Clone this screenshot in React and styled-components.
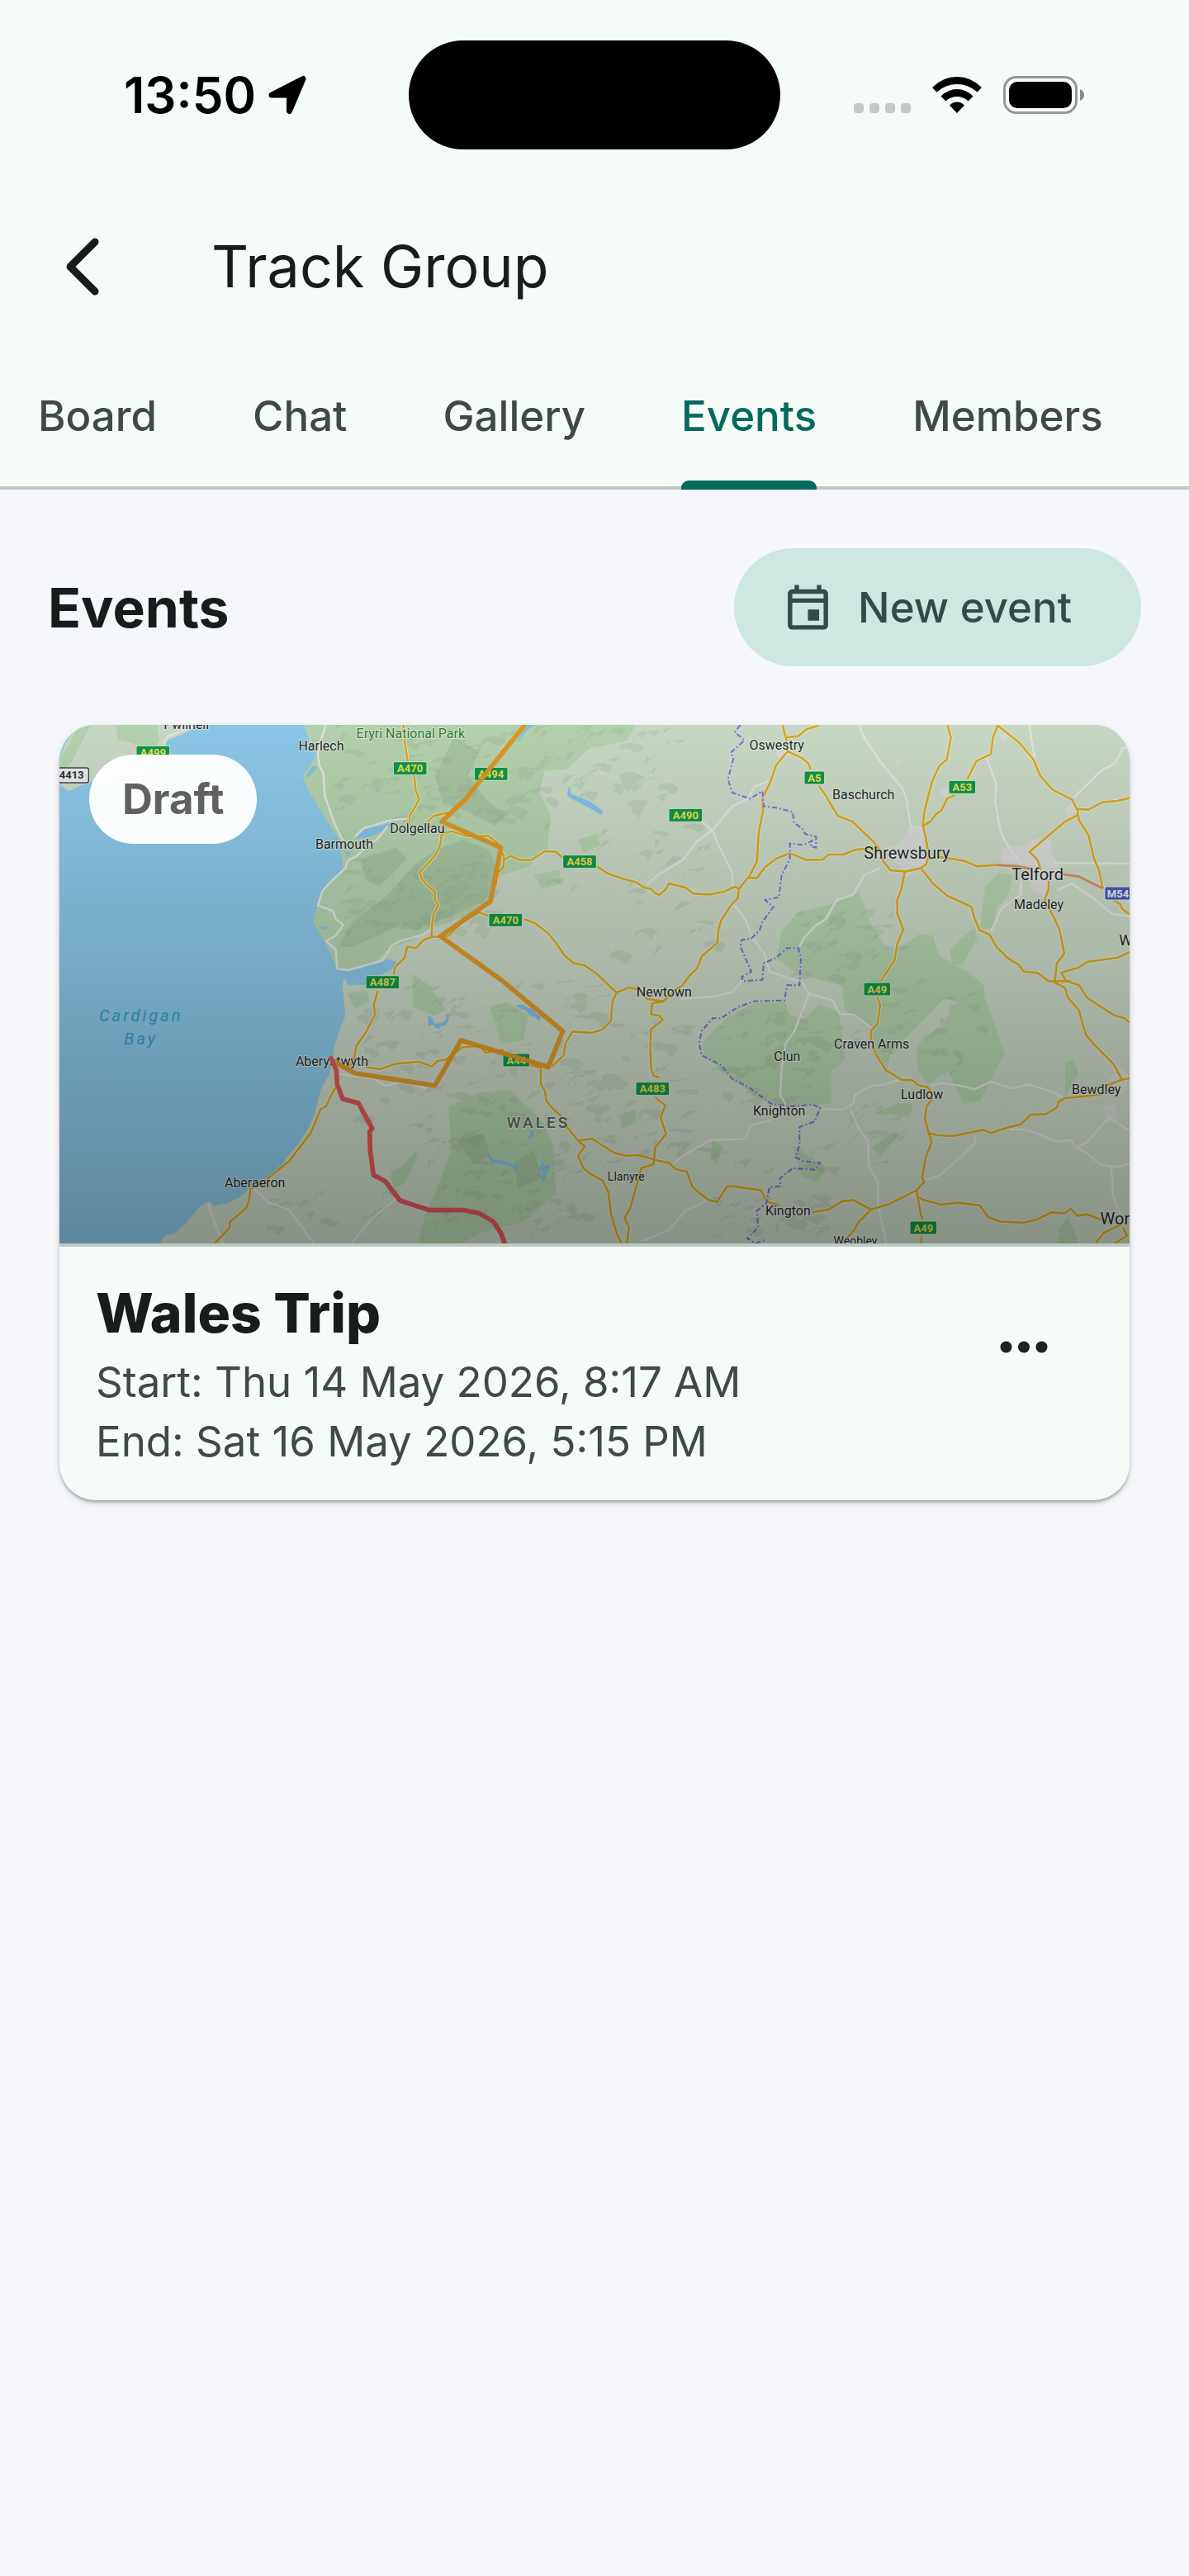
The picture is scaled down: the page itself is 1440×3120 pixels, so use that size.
import React from "react";
import styled, { createGlobalStyle, ThemeProvider } from "styled-components";

const theme = {
  colors: {
    surface: "#f5fbf7",
    page: "#f6f7fa",
    text: "#171d1b",
    muted: "#3f4946",
    primary: "#046b5c",
    tonal: "#cde8e0",
    onTonal: "#334b46",
    outline: "#bec9c4",
    draft: "#616161",
  },
  font: `Inter, Roboto, "Liberation Sans", sans-serif`,
};

const GlobalStyle = createGlobalStyle`
  * {
    box-sizing: border-box;
  }
  body {
    margin: 0;
    background-color: ${(props) => props.theme.colors.page};
    color: ${(props) => props.theme.colors.text};
    font-family: ${(props) => props.theme.font};
  }
  button {
    border: 0;
    padding: 0;
    background: none;
    color: inherit;
    font: inherit;
    cursor: pointer;
  }
  svg {
    display: block;
  }
`;

const Screen = styled.div`
  min-height: 100vh;
`;

const TopArea = styled.header`
  background: ${(props) => props.theme.colors.surface};
`;

const StatusBar = styled.div`
  display: grid;
  grid-template-columns: 1fr 450px 1fr;
  align-items: center;
  padding: 49px 0 35px;
  color: #000;
`;

const Clock = styled.div`
  display: flex;
  align-items: center;
  gap: 14px;
  padding-left: 150px;
  font-size: 60px;
  line-height: 72px;
  font-weight: 600;
`;

const Island = styled.div`
  height: 132px;
  border-radius: 66px;
  background: #000;
`;

const StatusIcons = styled.div`
  display: flex;
  align-items: center;
  justify-content: flex-end;
  gap: 26px;
  padding-right: 126px;
`;

const AppBar = styled.div`
  display: flex;
  align-items: center;
  gap: 96px;
  height: 214px;
  padding-left: 40px;
`;

const BackButton = styled.button`
  display: flex;
  align-items: center;
  justify-content: center;
  width: 120px;
  height: 120px;
`;

const PageTitle = styled.h1`
  margin: 0;
  font-size: 70px;
  line-height: 96px;
  font-weight: 400;
`;

const TabBar = styled.nav`
  display: flex;
  gap: 116px;
  height: 163px;
  padding-left: 46px;
  box-shadow: inset 0 -4px ${(props) => props.theme.colors.outline};
`;

const Tab = styled.button`
  position: relative;
  padding-bottom: 16px;
  font-size: 51px;
  line-height: 72px;
  font-weight: 500;
  white-space: nowrap;
  color: ${(props) =>
    props.$active ? props.theme.colors.primary : props.theme.colors.muted};

  &::after {
    content: "";
    display: ${(props) => (props.$active ? "block" : "none")};
    position: absolute;
    left: 0;
    right: 0;
    bottom: 0;
    height: 11px;
    border-radius: 9px 9px 0 0;
    background: ${(props) => props.theme.colors.primary};
  }
`;

const SectionHeader = styled.div`
  display: flex;
  align-items: center;
  justify-content: space-between;
  padding: 71px 58px;
`;

const SectionTitle = styled.h2`
  margin: 0;
  font-size: 66px;
  line-height: 76px;
  font-weight: 700;
`;

const NewEventButton = styled.button`
  display: flex;
  align-items: center;
  gap: 28px;
  height: 143px;
  padding: 0 84px 0 57px;
  border-radius: 72px;
  background: ${(props) => props.theme.colors.tonal};
  color: ${(props) => props.theme.colors.onTonal};
  font-size: 51px;
  line-height: 72px;
  font-weight: 500;
`;

const Card = styled.article`
  margin: 0 72px;
  border-radius: 44px;
  overflow: hidden;
  background: ${(props) => props.theme.colors.surface};
  box-shadow: 0 3px 3px rgba(0, 0, 0, 0.22), 0 3px 10px rgba(0, 0, 0, 0.12);
`;

const Cover = styled.div`
  position: relative;
  border-bottom: 4px solid ${(props) => props.theme.colors.outline};

  > svg {
    width: 100%;
    height: auto;
  }
`;

const DraftBadge = styled.span`
  position: absolute;
  top: 36px;
  left: 36px;
  padding: 18px 40px;
  border-radius: 54px;
  background: rgba(255, 255, 255, 0.96);
  color: ${(props) => props.theme.colors.draft};
  font-size: 51px;
  line-height: 72px;
  font-weight: 700;
`;

const CardBody = styled.div`
  display: flex;
  align-items: flex-start;
  justify-content: space-between;
  padding: 42px 68px 35px 44px;
`;

const EventTitle = styled.h3`
  margin: 0 0 10px;
  font-size: 66px;
  line-height: 76px;
  font-weight: 800;
`;

const EventDate = styled.p`
  margin: 0;
  font-size: 51px;
  line-height: 72px;
  color: ${(props) => props.theme.colors.muted};
`;

const MenuButton = styled.button`
  display: flex;
  align-items: center;
  justify-content: center;
  width: 120px;
  height: 120px;
  margin-top: 19px;
`;

const MapLabel = styled.text`
  font-family: Roboto, "Liberation Sans", sans-serif;
  font-size: ${(props) => props.$size || 48}px;
  fill: ${(props) => props.$fill || "#222a2c"};
  stroke: rgba(232, 236, 226, 0.75);
  stroke-width: 6px;
  stroke-linejoin: round;
  paint-order: stroke;
  text-anchor: middle;
`;

const CountryLabel = styled(MapLabel)`
  font-weight: 500;
  letter-spacing: 9px;
`;

const SeaLabel = styled.text`
  font-family: Roboto, "Liberation Sans", sans-serif;
  font-size: 60px;
  font-style: italic;
  letter-spacing: 9px;
  fill: #359cc9;
  text-anchor: middle;
`;

const SignText = styled.text`
  font-family: Roboto, "Liberation Sans", sans-serif;
  font-size: 39px;
  font-weight: 700;
  text-anchor: middle;
`;

const TABS = ["Board", "Chat", "Gallery", "Events", "Members"];

/* map data, in the units of the map's own view box */

const LAND = [
  "925,54 945,110 970,165 955,205 920,240 940,290 1000,380 1030,425 1050,470 1072,520 1065,560 1070,585 1010,630 990,660 975,710 957,770 985,815 1010,860 1045,942 1085,947 1180,918 1225,905 1262,915 1240,945 1200,962 1150,998 1085,998 1068,972 1065,1010 1075,1110 1055,1160 1035,1220 1028,1280 1018,1320 985,1380 965,1460 940,1520 900,1580 865,1620 840,1660 800,1695 730,1738 690,1770 645,1792 600,1802 580,1785 550,1800 490,1870 450,1905 420,1908 400,1938 3924,1938 3924,54",
  "100,54 80,90 58,120 36,180 36,270 70,295 110,275 150,262 250,260 300,240 370,215 370,190 420,150 424,112 500,80 545,54",
];

const GREENS = [
  "925,54 2130,54 2100,110 1960,140 1880,215 1800,220 1780,300 1820,380 1810,500 1740,570 1640,600 1580,720 1400,790 1330,830 1230,870 1180,915 1085,945 1045,940 1010,860 957,770 975,710 990,660 1070,585 1050,470 940,290 920,240 970,165",
  "36,180 60,140 110,54 150,54 110,130 80,190 36,230",
  "240,54 390,54 400,110 370,150 300,120 250,110",
  "1080,1030 1150,1020 1165,1060 1110,1085",
  "1450,1440 1560,1390 1670,1380 1780,1480 1830,1580 1840,1760 1720,1860 1560,1900 1500,1938 1340,1938 1370,1820 1400,1760 1460,1600",
  "1290,1720 1250,1740 1240,1680 1290,1650 1330,1600 1335,1630",
  "1400,1110 1320,1080 1320,960 1380,1000 1440,1090",
  "1600,1080 1660,1060 1740,1110 1720,1200 1640,1210",
  "2370,1210 2460,1120 2560,1065 2670,1060 2690,1110 2740,1120 2800,1070 2870,1100 2890,1270 2840,1310 2840,1430 2640,1440 2560,1400 2480,1340 2380,1260",
  "2660,800 2720,735 2860,700 2940,660 2990,790 3040,860 3080,870 3160,815 3210,820 3230,890 3340,955 3395,1000 3400,1080 3250,1050 3110,1190 3060,1240 3040,1310 2990,1250 2980,1160 2890,1090 2880,1000 2720,960 2640,900",
  "3150,1230 3180,1185 3240,1150 3300,1060 3400,1050 3470,1250 3420,1340 3380,1420 3320,1430 3265,1310 3190,1360 3155,1310",
  "3400,640 3450,590 3500,600 3480,680 3440,720 3430,790 3380,800",
  "3270,870 3360,790 3370,830 3320,920 3280,930",
  "3690,1280 3720,1270 3740,1320 3690,1400",
  "3670,1880 3700,1840 3740,1938 3660,1938",
  "2700,1580 2760,1620 2820,1660 2790,1720 2730,1690",
  "2990,1590 3070,1530 3080,1550 3020,1620",
  "2990,1470 3080,1430 3140,1430 3120,1480 3070,1470",
  "2070,1470 2130,1450 2130,1500 2080,1520",
  "2410,1560 2450,1590 2420,1650 2400,1620",
  "1760,600 1850,580 1860,630 1790,650",
  "1920,470 1990,450 2000,490 1940,520",
];

const FOREST = [
  "1330,560 1400,510 1500,470 1600,510 1630,600 1580,690 1480,740 1330,800 1260,790 1100,860 1050,860 1100,770 1220,680",
  "1470,100 1560,150 1520,240 1590,330 1660,380 1620,420 1500,360 1430,340 1400,240",
  "1130,540 1260,500 1300,540 1200,640 1150,620",
  "1480,1560 1580,1540 1600,1620 1540,1650",
  "1690,1640 1760,1600 1790,1700 1700,1740",
];

const TOWNS = [
  "3130,420 3180,420 3180,500 3190,560 3120,605 3080,560 3020,500 3080,495",
  "3460,500 3540,490 3590,465 3640,470 3640,520 3680,580 3640,640 3620,680 3570,660 3540,560 3460,555",
  "2630,130 2690,120 2690,160 2650,180",
  "3690,360 3720,330 3730,370 3700,395",
  "3850,1340 3890,1300 3924,1330 3900,1400 3860,1390",
  "3830,1440 3870,1430 3890,1490 3840,1500",
  "3230,290 3270,285 3260,315 3240,315",
  "3450,85 3480,85 3475,108 3455,105",
  "3075,185 3100,180 3080,205",
  "3120,1760 3150,1745 3155,1790",
  "2030,845 2050,840 2045,865",
];

const LAKES = [
  "1888,275 1895,305 1960,330 2010,365 2008,382 1960,355 1900,325 1880,310",
  "1700,115 1735,75 1760,54 1740,54 1705,95",
  "1375,1110 1388,1115 1400,1140 1430,1136 1442,1120 1440,1105 1455,1105 1448,1128 1440,1145 1422,1150 1415,1160 1398,1152 1390,1142 1376,1150",
  "1695,1072 1720,1070 1740,1082 1760,1085 1770,1105 1788,1110 1778,1132 1765,1115 1745,1110 1728,1090 1695,1078",
  "1586,1602 1610,1632 1650,1638 1690,1652 1702,1650 1695,1680 1680,1660 1640,1650 1605,1645",
  "1797,1595 1793,1640 1798,1655 1820,1652 1810,1680 1795,1712 1785,1708 1795,1680 1775,1665 1788,1650",
  "1758,1498 1750,1520 1762,1535 1755,1555 1735,1558 1748,1540",
  "1110,465 1150,430 1230,415 1270,408 1210,440 1150,465",
  "930,240 955,205 975,205 940,245",
  "975,790 1010,785 1005,798",
  "1070,515 1100,515 1085,532",
  "36,54 100,54 60,110 36,130",
];

const YELLOW_ROADS = [
  "1285,54 1290,110 1300,180 1325,240 1330,290 1343,325 1308,385 1308,410",
  "1455,370 1395,385 1370,410",
  "1670,110 1668,125 1640,150",
  "1425,450 1420,490 1400,530 1345,590 1352,612 1372,637 1400,660 1400,690 1413,710 1395,740 1390,780 1388,825 1360,835 1330,865 1300,860 1290,900 1255,935 1250,960",
  "1388,825 1450,820 1490,780 1560,735 1600,750",
  "1425,450 1460,440 1520,458 1595,458 1630,485 1650,530 1650,570 1630,590 1620,640",
  "1650,545 1675,530 1710,545 1750,545 1800,513 1840,515 1865,538",
  "1985,565 2030,595 2090,615 2130,625 2160,645 2185,650 2200,665 2215,672 2240,650 2250,630 2310,645 2340,667 2400,670 2450,660 2490,642 2505,650",
  "1725,760 1765,775 1810,810 1840,845 1870,890 1905,920 1945,928 1990,960 2060,1027 2105,1008 2145,1018 2170,1050 2230,1058 2275,1015 2300,1000 2325,965 2352,940 2370,895 2427,845 2430,800 2440,765 2475,710 2500,685 2505,650 2545,600 2570,550 2577,440 2592,370 2590,320 2620,260 2640,200 2682,150 2735,175 2758,195 2765,215",
  "2663,54 2675,100 2682,150",
  "2675,100 2720,95 2750,70 2795,56",
  "2795,275 2820,310 2840,345 2865,385 2917,405 2985,470 3010,497",
  "2540,610 2570,610 2600,570 2640,540 2690,520 2750,545 2810,543 2830,525 2885,525 2925,508 3010,498 3030,550 3055,582 3110,587 3165,575 3185,560 3195,530 3185,470 3173,420 3178,370 3205,265 3215,240 3235,200 3260,180 3275,100 3262,54",
  "3175,420 3200,405 3220,380 3240,365 3262,320 3290,310",
  "3335,250 3368,185 3420,160 3428,100 3445,56 3525,120 3575,180 3600,240 3645,290 3715,325 3735,365 3740,400 3775,455 3795,540 3812,580 3827,648",
  "3735,360 3775,362 3825,335 3880,330 3924,320",
  "3735,382 3690,405 3590,490 3560,515 3590,545 3602,580",
  "3225,533 3320,547 3370,568 3440,563",
  "3865,690 3890,705 3897,722 3924,742",
  "3168,578 3210,630 3262,675 3350,715 3360,755 3380,800 3415,815 3440,860 3480,900 3520,925 3540,950 3590,955 3630,985 3710,985",
  "3630,620 3630,650 3615,690 3650,755 3670,800 3687,885 3660,920 3652,990 3690,1010 3700,1045 3740,1090 3765,1180 3800,1220 3865,1285 3895,1340",
  "3924,880 3880,900 3770,915 3740,935 3675,955 3695,985 3740,1000 3770,1045 3830,1085 3870,1110 3905,1120 3924,1135",
  "3107,587 3095,650 3080,690 3080,740 3102,797 3080,850 3070,910 3020,985",
  "3007,1045 3018,1070 3008,1140 2985,1165 2985,1200 3005,1255 3040,1310 3095,1343 3135,1345 3155,1362 3190,1370 3205,1390 3205,1415 3187,1440 3180,1485 3195,1540 3205,1570 3182,1630 3170,1700 3178,1715 3150,1745 3165,1830 3172,1850",
  "3168,1910 3168,1938",
  "3195,1537 3225,1545 3280,1548 3320,1540 3395,1525 3420,1537 3470,1520 3530,1505 3565,1470 3620,1468 3660,1445 3665,1425 3690,1410 3745,1405 3830,1395",
  "3840,1365 3895,1343 3924,1338",
  "2770,1825 2830,1815 2880,1785 2920,1780 2985,1815 3050,1795 3110,1765 3150,1745",
  "2985,1815 2940,1860 2920,1895 2895,1920",
  "3160,1770 3175,1780 3240,1797 3300,1790 3380,1800 3410,1842 3450,1858 3540,1863 3590,1850 3640,1825 3690,1828 3710,1812 3735,1838 3770,1832 3830,1855",
  "3800,1938 3830,1900 3870,1880 3895,1870",
  "3900,1880 3915,1910 3870,1938",
  "1193,1020 1178,1070 1183,1105 1150,1170 1115,1220 1105,1270 1092,1292 1060,1303",
  "1040,1370 1018,1410 1005,1440 985,1450 950,1535 870,1640 850,1655 790,1705 730,1740 725,1780 715,1810 655,1860 655,1880 600,1938",
  "1150,1297 1200,1305 1260,1285 1340,1278 1390,1295 1410,1275 1440,1270 1480,1240 1500,1225 1560,1220 1585,1245 1650,1235",
  "1745,1290 1785,1300 1785,1360 1800,1385 1805,1420 1830,1450 1870,1485 1880,1515 1925,1570 1945,1585 1920,1620 1940,1665 1965,1685 2010,1710 2030,1750 2040,1830 2060,1900 2078,1938",
  "2060,1027 2045,1060 2040,1130 2010,1160 1970,1173 1900,1168 1875,1210 1868,1255 1825,1295",
  "2230,1060 2190,1065 2185,1105 2215,1110 2228,1125 2185,1160 2183,1230 2185,1300 2195,1328 2215,1335",
  "2200,1405 2215,1420 2238,1435 2220,1480 2240,1540 2200,1590 2195,1650 2150,1665 2110,1810 2090,1845 2105,1880 2098,1938",
  "1925,1565 1970,1557 2050,1608 2095,1620 2140,1617 2215,1638 2250,1645 2275,1668 2315,1677 2335,1730 2355,1750 2395,1780 2425,1787 2460,1733 2480,1730 2585,1745 2605,1785 2650,1800",
];

const WHITE_ROADS = [
  "1005,54 985,110 975,160 980,200 995,230 1000,310 1030,400 1060,465 1070,475",
  "1110,460 1140,430 1190,415 1240,400 1300,395",
  "540,54 470,80 430,95 415,125",
  "1230,420 1190,470 1150,500 1110,535 1085,545 1075,575 1020,625 990,660 975,710 1030,730 1040,760 1068,780 1040,820 1005,840 1040,870 1045,940 1085,945 1140,930 1210,910 1240,860 1270,840 1360,815 1400,785",
  "2170,635 2210,600 2300,545 2350,480 2410,435 2480,350 2540,320 2560,280 2610,258",
  "2370,405 2410,440 2425,480 2460,550 2480,590 2483,640",
  "2490,710 2530,765 2555,830 2600,890 2615,950 2735,990 2758,1030 2845,1055 2870,1105 2920,1105 2985,1155",
  "2760,1030 2740,1080 2705,1170 2675,1210 2660,1300 2655,1400 2680,1440",
  "2290,1050 2420,1040 2480,1025 2520,980",
  "2805,1450 2880,1452 2920,1430 2925,1400 2980,1367 3040,1360 3060,1350 3095,1345",
  "2910,1450 2940,1520 2975,1570 2975,1655 3010,1715 3010,1800 3040,1938",
  "3200,1365 3240,1355 3310,1365 3360,1378 3420,1350 3500,1375 3555,1360 3640,1385 3680,1405",
  "3480,1523 3550,1525 3660,1568 3710,1563 3730,1590 3770,1610 3815,1650 3875,1660 3924,1648",
  "3735,1588 3770,1570 3850,1480 3880,1500 3924,1530",
  "3855,1660 3862,1700 3862,1760 3890,1830",
  "3180,1710 3235,1690 3320,1615 3360,1575 3365,1545",
  "2940,54 2960,100 3020,190 3100,285 3115,330 3130,430",
  "3405,175 3440,270 3435,330 3455,440 3480,490 3530,560",
  "3560,54 3570,120 3582,190",
  "3720,320 3820,220 3870,195 3900,140 3924,130",
  "3650,555 3924,558",
  "3660,655 3715,630 3800,690 3860,740 3924,750",
  "3015,575 2960,600 2920,670 2860,690 2820,760 2780,785 2740,830 2725,860",
  "3420,805 3460,720 3530,670 3530,620",
  "2265,1650 2300,1620 2400,1563 2530,1558 2545,1510 2620,1490",
  "2150,1930 2250,1890 2310,1820 2390,1780",
  "745,1740 795,1790 870,1815 960,1938",
  "1095,1938 1170,1850 1260,1775",
  "580,1790 580,1810 630,1938",
  "1040,1320 1070,1325 1180,1340 1220,1365 1300,1350 1370,1375",
];

const ORANGE_ROADS = [
  "3440,563 3520,568 3570,578",
  "3680,597 3740,605 3780,625 3827,648",
];

const BORDER =
  "2510,54 2490,80 2525,110 2475,155 2485,175 2465,250 2480,300 2545,322 2590,295 2595,350 2640,355 2700,370 2705,410 2735,430 2745,450 2785,460 2785,500 2765,495 2770,475 2740,490 2690,485 2690,540 2660,600 2650,680 2600,690 2630,715 2590,770 2580,800 2550,830 2515,835 2510,860 2550,950 2515,970 2520,985 2590,980 2595,920 2640,900 2680,865 2720,865 2730,900 2725,1000 2680,1000 2670,1055 2560,1058 2500,1080 2440,1120 2410,1120 2370,1165 2360,1210 2370,1255 2440,1290 2480,1340 2540,1370 2620,1430 2700,1440 2770,1433 2800,1445 2780,1495 2725,1515 2725,1580 2710,1625 2740,1640 2800,1645 2780,1670 2700,1665 2655,1700 2655,1730 2615,1735 2605,1790 2570,1820 2575,1880 2535,1920 2565,1938 2600,1925";

const AMBER_ROUTE =
  "1730,50 1570,250 1510,325 1425,405 1640,500 1602,695 1420,822 1640,980 1865,1167 1812,1297 1495,1200 1400,1365 1320,1352 1110,1320 1025,1272";

const RED_ROUTE =
  "1023,1265 1042,1310 1045,1360 1065,1413 1122,1428 1172,1520 1163,1532 1165,1600 1177,1690 1220,1712 1273,1782 1380,1817 1505,1817 1560,1828 1612,1858 1640,1900 1655,1942";

const SIGNS = [
  { x: 315, y: 130, w: 122, name: "A499" },
  { x: 1249, y: 188, w: 122, name: "A470" },
  { x: 1543, y: 208, w: 122, name: "A494" },
  { x: 2250, y: 358, w: 122, name: "A490" },
  { x: 1865, y: 527, w: 122, name: "A458" },
  { x: 1596, y: 739, w: 122, name: "A470" },
  { x: 2742, y: 222, w: 74, name: "A5" },
  { x: 3267, y: 256, w: 98, name: "A53" },
  { x: 1149, y: 965, w: 122, name: "A487" },
  { x: 1647, y: 1248, w: 98, name: "A44" },
  { x: 2130, y: 1352, w: 122, name: "A483" },
  { x: 2958, y: 990, w: 98, name: "A49" },
  { x: 3126, y: 1857, w: 98, name: "A49" },
];

const PLACES = [
  { x: 497, y: 70, name: "Pwllheli" },
  { x: 317, y: 262, name: "Llanengan", size: 42 },
  { x: 987, y: 148, name: "Harlech" },
  { x: 1071, y: 504, name: "Barmouth" },
  { x: 1336, y: 448, name: "Dolgellau" },
  { x: 2642, y: 145, name: "Oswestry" },
  { x: 2957, y: 324, name: "Baschurch" },
  { x: 3115, y: 541, name: "Shrewsbury", size: 60 },
  { x: 3590, y: 617, name: "Telford", size: 60 },
  { x: 3594, y: 724, name: "Madeley" },
  { x: 4075, y: 855, name: "Wolverhampton", size: 54 },
  { x: 1026, y: 1294, name: "Aberystwyth" },
  { x: 746, y: 1733, name: "Aberaeron" },
  { x: 2233, y: 1040, name: "Newtown" },
  { x: 2095, y: 1711, name: "Llanyre", size: 42 },
  { x: 2680, y: 1276, name: "Clun" },
  { x: 2651, y: 1474, name: "Knighton" },
  { x: 2987, y: 1229, name: "Craven Arms" },
  { x: 3170, y: 1414, name: "Ludlow" },
  { x: 3803, y: 1394, name: "Bewdley" },
  { x: 2683, y: 1836, name: "Kington" },
  { x: 2928, y: 1944, name: "Weobley", size: 42 },
  { x: 3954, y: 1868, name: "Worcester", size: 60 },
];

// areas that carry relief shading: x, y, width, height, number of ridges
const RELIEF = [
  [1030, 70, 680, 330, 60],
  [1050, 540, 550, 270, 70],
  [1700, 70, 560, 300, 40],
  [1780, 400, 620, 500, 26],
  [1100, 1000, 900, 500, 80],
  [1300, 1480, 640, 430, 50],
  [1950, 1100, 400, 560, 34],
  [2400, 1100, 440, 330, 40],
  [2670, 730, 380, 280, 28],
  [2900, 1000, 480, 330, 26],
  [2330, 1600, 480, 320, 34],
  [2900, 1450, 240, 200, 10],
  [760, 1740, 500, 180, 12],
];

const ridges = (() => {
  let seed = 7;
  const rand = () => {
    seed = (seed * 16807) % 2147483647;
    return seed / 2147483647;
  };
  return RELIEF.flatMap(([x, y, w, h, count]) =>
    Array.from({ length: count }, () => {
      const px = Math.round(x + rand() * w);
      const py = Math.round(y + rand() * h);
      const dx = Math.round(30 + rand() * 60);
      const dy = Math.round(-46 + rand() * 60);
      const t = Math.round(6 + rand() * 18);
      const half = Math.round(dx / 2);
      return `M${px} ${py}q${half} ${-t} ${dx} ${dy}q${-t} ${t * 2} ${-half} ${t}q${-t} ${-t} ${-half} ${-dy}z`;
    })
  ).join("");
})();

const polygons = (list, fill) =>
  list.map((points) => <polygon key={points} points={points} fill={fill} />);

const lines = (list, stroke, width) =>
  list.map((points) => (
    <polyline
      key={points}
      points={points}
      fill="none"
      stroke={stroke}
      strokeWidth={width}
      strokeLinejoin="round"
    />
  ));

function RouteMap() {
  return (
    <svg viewBox="36 54 3888 1884" role="img" aria-label="Route map">
      <defs>
        <linearGradient id="shade" x1="0" y1="0" x2="0" y2="1">
          <stop offset="0" stopColor="#000" stopOpacity="0" />
          <stop offset="1" stopColor="#000" stopOpacity="0.32" />
        </linearGradient>
      </defs>
      <rect x="36" y="54" width="3888" height="1884" fill="#8ac6e6" />
      {polygons(LAND, "#c8d6c4")}
      {polygons(GREENS, "#b2d0ac")}
      {polygons(FOREST, "#a5c39f")}
      <path d={ridges} fill="#8fa287" fillOpacity="0.22" />
      {polygons(TOWNS, "#d6d8d6")}
      {polygons(LAKES, "#83c0e4")}
      {lines(WHITE_ROADS, "#e0e2e0", 7)}
      {lines(YELLOW_ROADS, "#e2e3d8", 13)}
      {lines(YELLOW_ROADS, "#d6ab20", 8)}
      {lines(ORANGE_ROADS, "#da8a50", 8)}
      <polyline
        points={BORDER}
        fill="none"
        stroke="#d4d4e0"
        strokeWidth="9"
        strokeOpacity="0.5"
      />
      <polyline
        points={BORDER}
        fill="none"
        stroke="#7a74cc"
        strokeWidth="6"
        strokeDasharray="20 8 6 8"
      />
      {PLACES.map((place) => (
        <MapLabel key={place.name} x={place.x} y={place.y} $size={place.size}>
          {place.name}
        </MapLabel>
      ))}
      <MapLabel x="1312" y="103" $fill="#2f7d32">
        Eryri National Park
      </MapLabel>
      <CountryLabel x="1776" y="1517" $size={57} $fill="#5c625f">
        WALES
      </CountryLabel>
      <SeaLabel x="332" y="1132">
        Cardigan
      </SeaLabel>
      <SeaLabel x="332" y="1215">
        Bay
      </SeaLabel>
      {SIGNS.map((sign) => (
        <g key={`${sign.name}-${sign.x}`}>
          <rect
            x={sign.x}
            y={sign.y}
            width={sign.w}
            height="48"
            rx="6"
            fill="#119447"
            stroke="#d5e6d0"
            strokeWidth="3"
          />
          <SignText x={sign.x + sign.w / 2} y={sign.y + 38} fill="#e3dd5a">
            {sign.name}
          </SignText>
        </g>
      ))}
      <rect
        x="0"
        y="210"
        width="142"
        height="54"
        rx="8"
        fill="#e8e8e8"
        stroke="#40444a"
        strokeWidth="4"
      />
      <SignText x="80" y="250" fill="#2b3034">
        4413
      </SignText>
      <rect
        x="3834"
        y="642"
        width="110"
        height="48"
        rx="6"
        fill="#4456b8"
        stroke="#d5dce6"
        strokeWidth="3"
      />
      <SignText x="3882" y="680" fill="#e6e9ee">
        M54
      </SignText>
      <polyline
        points={AMBER_ROUTE}
        fill="none"
        stroke="#dd9420"
        strokeWidth="17"
        strokeOpacity="0.94"
        strokeLinejoin="round"
      />
      <polyline
        points={RED_ROUTE}
        fill="none"
        stroke="#dd5656"
        strokeWidth="17"
        strokeLinejoin="round"
        strokeLinecap="round"
      />
      <rect x="36" y="54" width="3888" height="1884" fill="url(#shade)" />
    </svg>
  );
}

function LocationIcon() {
  return (
    <svg width="48" height="48" viewBox="0 0 48 48" aria-hidden="true">
      <path
        d="M43 4.500 26.500 43.500V24H5Z"
        fill="currentColor"
        stroke="currentColor"
        strokeWidth="7"
        strokeLinejoin="round"
      />
    </svg>
  );
}

function SignalIcon() {
  return (
    <svg width="69" height="44" viewBox="0 0 69 44" aria-hidden="true">
      {[0, 19, 38, 57].map((x) => (
        <rect key={x} x={x} y="32" width="12" height="12" rx="4" fill="#c4c9c5" />
      ))}
    </svg>
  );
}

function WifiIcon() {
  return (
    <svg width="60" height="44" viewBox="0 0 60 44" aria-hidden="true">
      <path d="M0 13Q13 0 30 0T60 13L54.500 18.500Q44 9 30 9T5.500 18.500Z" />
      <path d="M10.500 23.500Q19 15 30 15T49.500 23.500L43.500 29.500Q38 24 30 24T16.500 29.500Z" />
      <path d="M21 34.500Q25 30.500 30 30.500T39 34.500L30 44Z" />
    </svg>
  );
}

function BatteryIcon() {
  return (
    <svg width="99" height="46" viewBox="0 0 99 46" aria-hidden="true">
      <rect
        x="1.500"
        y="1.500"
        width="87"
        height="43"
        rx="14"
        fill="none"
        stroke="#939a96"
        strokeWidth="3"
      />
      <rect x="7" y="7" width="76" height="32" rx="10" />
      <path d="M93 16Q98 18 98 23T93 30Z" fill="#868b88" />
    </svg>
  );
}

function BackIcon() {
  return (
    <svg width="40" height="70" viewBox="0 0 40 70" aria-hidden="true">
      <path
        d="M35 5 5 35 35 65"
        fill="none"
        stroke="currentColor"
        strokeWidth="9"
        strokeLinecap="round"
        strokeLinejoin="round"
      />
    </svg>
  );
}

function EventIcon() {
  return (
    <svg width="65" height="65" viewBox="0 0 24 24" aria-hidden="true">
      <path
        fill="currentColor"
        d="M19 4h-1V2h-2v2H8V2H6v2H5c-1.110 0-2 .9-2 2v14c0 1.100.89 2 2 2h14c1.100 0 2-.9 2-2V6c0-1.100-.9-2-2-2zm0 16H5V10h14v10zm0-12H5V6h14v2zm-7 5h5v5h-5z"
      />
    </svg>
  );
}

function MoreIcon() {
  return (
    <svg width="58" height="15" viewBox="0 0 58 15" aria-hidden="true">
      {[7.5, 29, 50.5].map((cx) => (
        <circle key={cx} cx={cx} cy="7.500" r="7" fill="#212121" />
      ))}
    </svg>
  );
}

function EventCard({ title, start, end }) {
  return (
    <Card>
      <Cover>
        <RouteMap />
        <DraftBadge>Draft</DraftBadge>
      </Cover>
      <CardBody>
        <div>
          <EventTitle>{title}</EventTitle>
          <EventDate>Start: {start}</EventDate>
          <EventDate>End: {end}</EventDate>
        </div>
        <MenuButton aria-label="More options">
          <MoreIcon />
        </MenuButton>
      </CardBody>
    </Card>
  );
}

export default function App() {
  return (
    <ThemeProvider theme={theme}>
      <GlobalStyle />
      <Screen>
        <TopArea>
          <StatusBar>
            <Clock>
              13:50
              <LocationIcon />
            </Clock>
            <Island />
            <StatusIcons>
              <SignalIcon />
              <WifiIcon />
              <BatteryIcon />
            </StatusIcons>
          </StatusBar>
          <AppBar>
            <BackButton aria-label="Back">
              <BackIcon />
            </BackButton>
            <PageTitle>Track Group</PageTitle>
          </AppBar>
          <TabBar>
            {TABS.map((tab) => (
              <Tab key={tab} $active={tab === "Events"}>
                {tab}
              </Tab>
            ))}
          </TabBar>
        </TopArea>
        <main>
          <SectionHeader>
            <SectionTitle>Events</SectionTitle>
            <NewEventButton>
              <EventIcon />
              New event
            </NewEventButton>
          </SectionHeader>
          <EventCard
            title="Wales Trip"
            start="Thu 14 May 2026, 8:17 AM"
            end="Sat 16 May 2026, 5:15 PM"
          />
        </main>
      </Screen>
    </ThemeProvider>
  );
}
